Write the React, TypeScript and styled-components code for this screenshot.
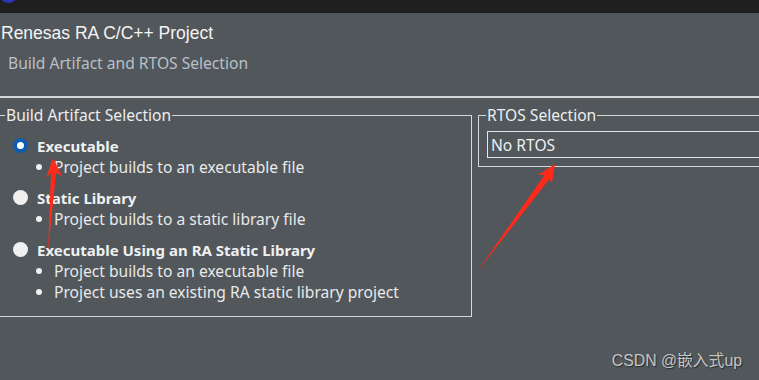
import styled, { createGlobalStyle } from 'styled-components';

const GlobalStyle = createGlobalStyle`
  html, body {
    margin: 0;
    padding: 0;
    background: #52575b;
  }
  body {
    width: 759px;
    height: 380px;
    overflow: hidden;
    font-family: 'Noto Sans', 'Open Sans', sans-serif;
    color: #e6e8ea;
  }
`;

const Page = styled.div`
  position: relative;
  width: 759px;
  height: 380px;
  overflow: hidden;
  background: #52575b;
`;

const TopBar = styled.div`
  position: relative;
  height: 13px;
  background: #1f1f1f;
`;

const AppIcon = styled.div`
  position: absolute;
  left: 0;
  top: -12px;
  width: 17px;
  height: 15px;
  border-radius: 50%;
  background: #2b36b8;
`;

const Header = styled.div`
  padding: 10px 0 0 1px;
`;

const Title = styled.h1`
  margin: 0;
  font-family: 'Liberation Sans', Arial, sans-serif;
  font-size: 17.5px;
  font-weight: 400;
  line-height: 20px;
  color: #f4f4f4;
`;

const Subtitle = styled.div`
  margin: 10px 0 0 7px;
  font-size: 15.6px;
  line-height: 20px;
  color: #b9c0c8;
`;

const Separator = styled.div`
  margin-top: 23px;
  height: 2px;
  background: #d4d6d8;
`;

const Groups = styled.div`
  display: flex;
  align-items: flex-start;
  gap: 6px;
  margin-top: 7px;
`;

const Group = styled.fieldset<{ $width: number }>`
  box-sizing: border-box;
  width: ${(p) => p.$width}px;
  flex-shrink: 0;
  margin: 0;
  padding: 0 7px;
  border: 1px solid #d6d8da;
  min-width: 0;
`;

const ArtifactGroup = styled(Group)`
  margin-left: -3px;
  padding-bottom: 14px;
`;

const RtosGroup = styled(Group)`
  padding-bottom: 8px;
`;

const Legend = styled.legend`
  padding: 0 1px;
  font-size: 15.6px;
  line-height: 20px;
  color: #eceeef;
`;

const OptionList = styled.div`
  display: flex;
  flex-direction: column;
  gap: 10px;
  padding: 10px 0 0 8px;
`;

const Option = styled.div`
  display: flex;
  flex-direction: column;
`;

const RadioRow = styled.label`
  display: flex;
  align-items: center;
  gap: 9px;
  height: 21px;
  font-size: 15px;
  font-weight: 700;
  color: #eef0f2;
`;

const Radio = styled.span<{ $checked?: boolean }>`
  box-sizing: border-box;
  width: 15px;
  height: 15px;
  border-radius: 50%;
  background: ${(p) => (p.$checked ? '#ffffff' : '#f0f0f0')};
  border: ${(p) => (p.$checked ? '4.5px solid #0b5cb3' : 'none')};
  flex-shrink: 0;
`;

const BulletList = styled.ul`
  margin: 0;
  padding: 0 0 0 23px;
  list-style: none;
`;

const Bullet = styled.li`
  display: flex;
  align-items: center;
  gap: 12px;
  height: 21px;
  font-size: 15.6px;
  color: #e8eaec;

  &::before {
    content: '';
    width: 6px;
    height: 6px;
    border-radius: 50%;
    background: #eef0f2;
    flex-shrink: 0;
  }
`;

const TextBox = styled.div`
  box-sizing: border-box;
  height: 27px;
  margin: 6px 0 0 1px;
  padding-left: 3px;
  display: flex;
  align-items: center;
  border: 1px solid #e4e6e8;
  font-size: 15.6px;
  color: #eef0f2;
`;

const Annotations = styled.svg`
  position: absolute;
  left: 0;
  top: 0;
  pointer-events: none;
`;

const Watermark = styled.div`
  position: absolute;
  right: 17px;
  bottom: 9px;
  font-family: 'Liberation Sans', 'Noto Sans CJK SC', sans-serif;
  font-size: 15.8px;
  color: #c4c6c8;
  text-shadow: 1px 1px 1px rgba(0, 0, 0, 0.5);
`;

const options = [
  { label: 'Executable', checked: true, notes: ['Project builds to an executable file'] },
  { label: 'Static Library', checked: false, notes: ['Project builds to a static library file'] },
  {
    label: 'Executable Using an RA Static Library',
    checked: false,
    notes: ['Project builds to an executable file', 'Project uses an existing RA static library project'],
  },
];

export default function App() {
  return (
    <Page>
      <GlobalStyle />
      <TopBar>
        <AppIcon />
      </TopBar>
      <Header>
        <Title>Renesas RA C/C++ Project</Title>
        <Subtitle>Build Artifact and RTOS Selection</Subtitle>
      </Header>
      <Separator />
      <Groups>
        <ArtifactGroup $width={475}>
          <Legend>Build Artifact Selection</Legend>
          <OptionList>
            {options.map((o) => (
              <Option key={o.label}>
                <RadioRow>
                  <Radio $checked={o.checked} />
                  {o.label}
                </RadioRow>
                <BulletList>
                  {o.notes.map((n) => (
                    <Bullet key={n}>{n}</Bullet>
                  ))}
                </BulletList>
              </Option>
            ))}
          </OptionList>
        </ArtifactGroup>
        <RtosGroup $width={300}>
          <Legend>RTOS Selection</Legend>
          <TextBox>No RTOS</TextBox>
        </RtosGroup>
      </Groups>

      <Annotations width="759" height="380" viewBox="0 0 759 380">
        <polygon points="53,158 62,176 56,173 48,252 51,173 46,178" fill="#ff2a1a" />
        <polygon points="555,164 552,183 549,179.5 477,272 544.5,175 538,175" fill="#ff2a1a" />
      </Annotations>
      <Watermark>CSDN @嵌入式up</Watermark>
    </Page>
  );
}
